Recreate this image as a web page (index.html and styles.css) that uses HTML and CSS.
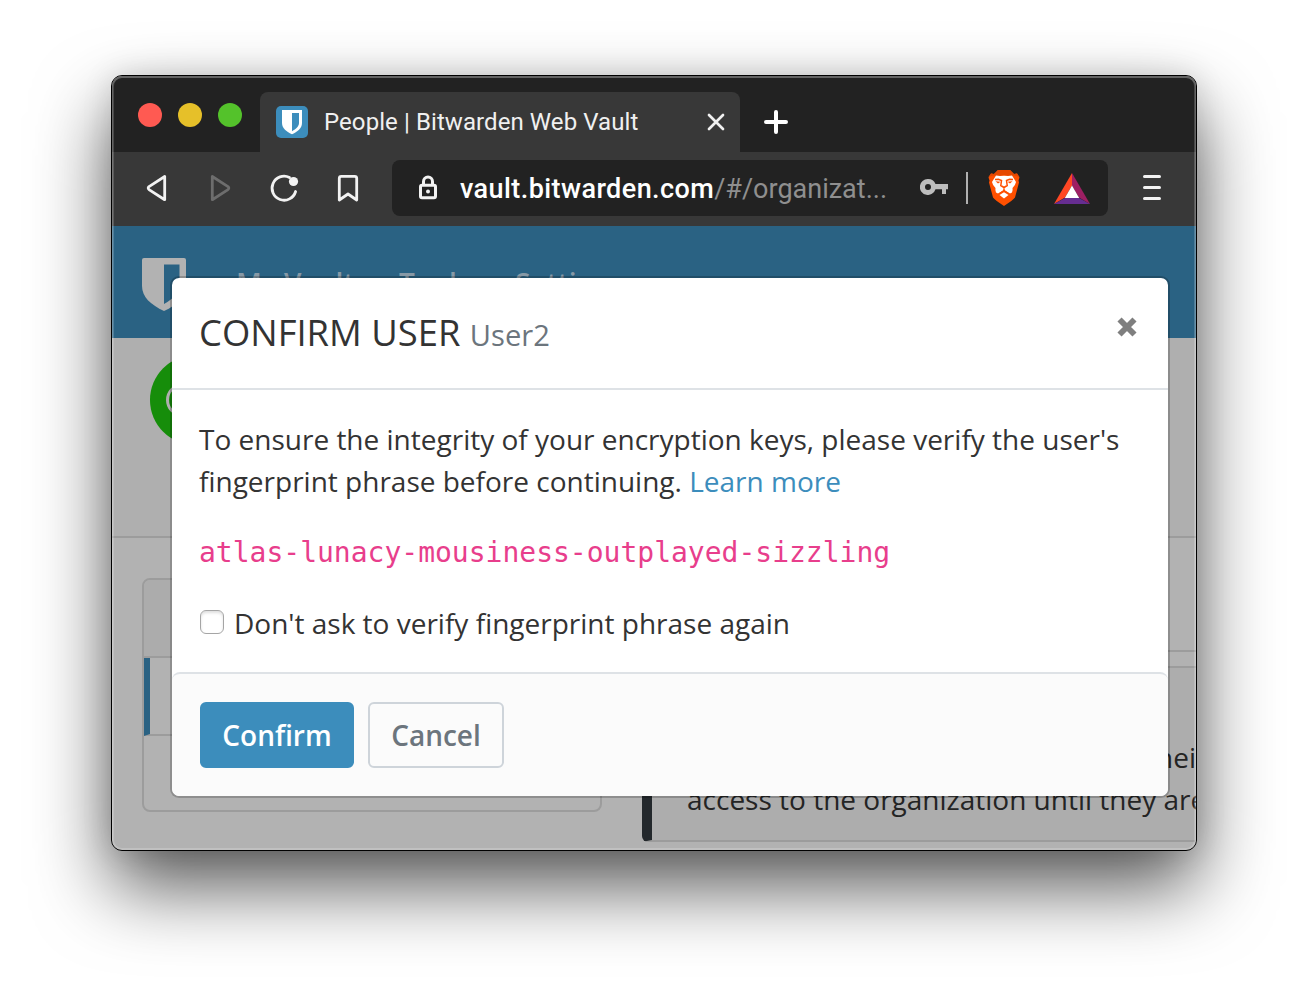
FILE: index.html
```
<!DOCTYPE html>
<html lang="en">
<head>
<meta charset="utf-8">
<title>People | Bitwarden Web Vault</title>
<link rel="stylesheet" href="styles.css">
</head>
<body>
<div class="window">
  <div class="tabstrip">
    <div class="lights"><i class="light red"></i><i class="light yellow"></i><i class="light green"></i></div>
    <div class="tab">
      <svg class="favicon" width="32" height="32" viewBox="0 0 32 32"><rect width="32" height="32" rx="5" fill="#3c8dbc"/><path d="M6 4h20v13c0 5-4 8.500-10 11.300C10 25.500 6 22 6 17z" fill="#fff"/><path d="M16 7h7v10c0 3.300-3 6-7 8.200z" fill="#3c8dbc"/></svg>
      <span class="tab-title">People | Bitwarden Web Vault</span>
      <svg class="tab-close" width="18" height="18" viewBox="0 0 18 18"><path d="M2 2l14 14M16 2L2 16" stroke="#f0f0f0" stroke-width="2.700" stroke-linecap="round"/></svg>
    </div>
    <svg class="newtab" width="24" height="24" viewBox="0 0 24 24"><path d="M12 2v20M2 12h20" stroke="#fff" stroke-width="4" stroke-linecap="round"/></svg>
  </div>
  <div class="toolbar">
    <svg class="nav" width="250" height="40" viewBox="142 168 250 40" fill="none" stroke="#f2f2f2" stroke-width="2.800" stroke-linejoin="round" stroke-linecap="round">
      <path d="M164.700 176.500v23.200L149 189.600q-1.600-1.500 0-3z"/>
      <path d="M212.300 176.500v23.200L228 189.600q1.600-1.500 0-3z" stroke="#6d6d6d"/>
      <path d="M289.500 177.500A12 12 0 1 0 295.600 191.500"/>
      <circle cx="293.500" cy="181.500" r="4.600" fill="#f2f2f2" stroke="none"/>
      <path d="M339.300 200v-21.700q0-2 2-2h13.400q2 0 2 2V200l-8.700-6z"/>
    </svg>
    <div class="address">
      <svg class="lock" width="20" height="26" viewBox="0 0 20 26" fill="none" stroke="#f2f2f2" stroke-width="3"><rect x="2.500" y="10.300" width="15" height="12.400" rx="1.500"/><path d="M5.500 10V6.500a4.500 4.500 0 0 1 9 0V10"/><circle cx="10" cy="16.500" r="2" fill="#f2f2f2" stroke="none"/></svg>
      <span class="url"><span class="domain">vault.bitwarden.com</span><span class="path">/#/organizat...</span></span>
      <svg class="key" width="28" height="16" viewBox="0 0 28 16"><path fill-rule="evenodd" fill="#bdbdbd" d="M8 0a8 8 0 0 1 7.500 5H28v5.300h-2V15h-4v-4.700h-6.500A8 8 0 1 1 8 0zm0 5a3 3 0 1 0 0 6 3 3 0 0 0 0-6z"/></svg>
      <i class="divider"></i>
      <svg class="brave" width="32" height="36" viewBox="0 0 32 36"><path fill="#ff5000" d="M10 0h12l4 4 3-.5 2.500 4-1 3 .5 2-4 15Q25 30 16 36 7 30 5 27.500L1 12.500l.5-2-1-3 2.500-4 3 .5z"/><path fill="#e64800" d="M10 0h12l4 4 3-.5 2.500 3.500-5-1.500L21 6l-5-1-5 1-5.500-.5L.5 7 3 3.500l3 .5z"/><path fill="#fff" d="M8 5.500l4 .6 4-.4 4 .4 4-.6 4 6.500q-.5 3-3.500 6 .5 2.500-.5 4.500l-2 1-6-3.500-6 3.500-2-1q-1-2-.5-4.500-3-3-3.500-6z"/><path fill="none" stroke="#ff5000" stroke-width="1.500" d="M7 9.500l3.500-.3 3 1.300-.7 5L16 17.500l3.200-2-.7-5 3-1.300 3.500.3M16 17.500v3l-5 3.500M16 20.500l5 3.500"/><path fill="#ff5000" d="M7.500 11.300l5 .5-2.500 1.700zM24.500 11.300l-5 .5 2.500 1.700z"/><path fill="#fff" d="M11.500 25L16 22.300l4.500 2.700L16 28.500z"/></svg>
      <svg class="bat" width="36" height="31" viewBox="0 0 36 31"><path fill="#ff4724" d="M18 0v12.500l-7 12L0 31z"/><path fill="#9e1f63" d="M18 0l18 31-11-6.500-7-12z"/><path fill="#662d91" d="M0 31l11-6h14l11 6z"/><path fill="#fff" d="M18 12.500L25.200 25H10.800z"/></svg>
    </div>
    <svg class="menu" width="18" height="26" viewBox="0 0 18 26"><path d="M1.500 2.500h15M1.500 13.500h15M1.500 24.500h15" stroke="#f2f2f2" stroke-width="3" stroke-linecap="round"/></svg>
  </div>
  <div class="viewport">
    <div class="navbar">
      <svg class="logo" width="44" height="53" viewBox="0 0 44 53"><path d="M2 0h40q2 0 2 2v26c0 11-9 19-22 25C9 47 0 39 0 28V2q0-2 2-2z" fill="#b2b2b2"/><path d="M22 6.500h15.500V28c0 7-6 12.500-15.500 18z" fill="#2a6283"/></svg>
      <span class="link vault">My Vault</span><span class="link tools">Tools</span><span class="link">Settings</span>
    </div>
    <div class="orgbar"><div class="avatar"><i class="ring"></i></div></div>
    <div class="content">
      <div class="sidebar"><div class="side-head"></div><div class="side-item active"></div><div class="side-item"></div></div>
      <div class="main">
        <div class="heading"></div>
        <div class="callout"><p class="need">their</p><p>access to the organization until they are</p></div>
      </div>
    </div>
    <div class="modal">
      <div class="modal-head">
        <h2 class="title">CONFIRM USER <small class="who">User2</small></h2>
        <svg class="close" width="20" height="20" viewBox="0 0 20 20"><path d="M2.500 2.500l15 15M17.500 2.500l-15 15" stroke="#7f7f7f" stroke-width="5.800"/></svg>
      </div>
      <div class="modal-body">
        <p class="text">To ensure the integrity of your encryption keys, please verify the user's<br>fingerprint phrase before continuing. <a class="more">Learn more</a></p>
        <p class="phrase">atlas-lunacy-mousiness-outplayed-sizzling</p>
        <label class="check"><i class="box"></i><span>Don't ask to verify fingerprint phrase again</span></label>
      </div>
      <div class="modal-foot"><button class="btn primary">Confirm</button><button class="btn outline">Cancel</button></div>
    </div>
  </div>
</div>
</body>
</html>
```
FILE: styles.css
```
* { box-sizing: border-box; }
body { margin: 0; height: 998px; overflow: hidden; background: #fff; padding: 75px 0 0 111px; font-family: "Open Sans", sans-serif; font-size: 28px; line-height: 42px; color: #333; }
p, h2 { margin: 0; }
svg { display: block; flex: none; }
.window { position: relative; width: 1086px; height: 776px; border: 1px solid #000; border-radius: 11px; background: #b2b2b2; box-shadow: 0 36px 76px rgba(0,0,0,.66), 0 0 30px rgba(0,0,0,.12); }
.window::after { content: ""; position: absolute; inset: 0; border-radius: 10px; box-shadow: inset 0 0 0 2px rgba(255,255,255,.18), inset 0 1px 0 1px rgba(255,255,255,.15); pointer-events: none; }
.tabstrip { display: flex; height: 76px; background: #222; border-radius: 10px 10px 0 0; }
.lights { display: flex; gap: 16px; width: 148px; padding: 27px 0 0 26px; flex: none; }
.light { width: 24px; height: 24px; border-radius: 50%; }
.red { background: #ff5a52; }
.yellow { background: #e6c029; }
.green { background: #54c22b; }
.tab { display: flex; align-items: center; width: 480px; height: 60px; margin-top: 16px; padding: 0 15px 0 16px; background: #383838; border-radius: 8px 8px 0 0; }
.tab-title { flex: 1; margin-left: 16px; font: 24px/30px Roboto, sans-serif; letter-spacing: .08px; color: #f0f0f0; white-space: nowrap; }
.newtab { margin: 34px 0 0 24px; }
.toolbar { display: flex; height: 74px; background: #383838; }
.nav { margin: 16px 0 0 30px; }
.address { display: flex; align-items: center; width: 716px; height: 56px; margin-top: 8px; padding: 0 18px 0 26px; background: #222; border-radius: 8px; }
.url { width: 428px; margin: 2px 0 0 22px; font: 27px/34px Roboto, sans-serif; color: #fff; white-space: nowrap; }
.domain { font-weight: 500; letter-spacing: .42px; }
.path { color: #8f8f8f; }
.key { margin: -2px 0 0 32px; }
.divider { width: 2px; height: 32px; margin-left: 18px; background: #b0b0b0; }
.brave { margin-left: 20px; }
.bat { margin-left: 34px; }
.menu { margin: 22px 0 0 35px; }
.viewport { position: relative; height: 624px; overflow: hidden; border-radius: 0 0 10px 10px; }
.navbar { display: flex; height: 112px; padding: 32px 0 0 30px; background: #2a6283; }
.link { margin-top: 4px; font-weight: 600; color: #8799a6; white-space: nowrap; }
.vault { margin-left: 50px; width: 163px; }
.tools { width: 116px; }
.orgbar { height: 200px; padding: 17px 0 0 38px; background: #afafaf; border-bottom: 2px solid #9c9c9c; }
.avatar { width: 90px; height: 90px; padding: 29px 0 0 16px; border-radius: 50%; background: #168d0a; }
.ring { display: block; width: 30px; height: 32px; border: 3px solid #afafaf; border-radius: 50%; }
.content { display: flex; gap: 40px; height: 312px; padding: 40px 0 0 30px; }
.sidebar { width: 460px; height: 234px; flex: none; border: 2px solid #9c9c9c; border-radius: 8px; }
.side-head { height: 78px; background: #acacac; border-bottom: 2px solid #9c9c9c; border-radius: 6px 6px 0 0; }
.side-item { height: 78px; }
.active { border-left: 6px solid #2a6283; border-bottom: 2px solid #9c9c9c; }
.main { width: 660px; flex: none; }
.heading { height: 74px; margin-bottom: 14px; border-bottom: 2px solid #9c9c9c; }
.callout { height: 176px; padding: 68px 0 0 35px; border: 2px solid #9c9c9c; border-left: 10px solid #23282c; border-radius: 6px; background: #adadad; color: #242424; white-space: nowrap; }
.need { padding-left: 459px; }
.modal { position: absolute; left: 58px; top: 50px; width: 1000px; height: 522px; border: 2px solid rgba(0,0,0,.2); border-radius: 9px; background: #fff; background-clip: padding-box; }
.modal-head { display: flex; justify-content: space-between; height: 112px; padding: 27px 31px 0 27px; border-bottom: 2px solid #dee2e6; }
.title { font-size: 36.400px; line-height: 54px; font-weight: 400; }
.who { font-size: 80%; color: #6c757d; }
.close { margin-top: 12px; }
.modal-body { height: 282px; padding: 28px 27px; }
.more { color: #3c8dbc; }
.text { white-space: nowrap; }
.phrase { margin-top: 30px; font: 28px/42px "DejaVu Sans Mono", monospace; color: #e83e8c; }
.check { display: flex; margin-top: 28px; }
.box { width: 24px; height: 24px; margin: 8px 10px 0 1px; border: 1px solid #a5a5a5; border-radius: 6px; background: #fff; box-shadow: inset 0 2px 3px rgba(0,0,0,.13); }
.modal-foot { display: flex; gap: 14px; height: 124px; padding: 28px; border-top: 2px solid #dee2e6; border-radius: 8px; background: #fbfbfb; }
.btn { height: 66px; padding: 0; border-radius: 6px; font: 600 28px/42px "Open Sans", sans-serif; }
.primary { width: 154px; border: 2px solid #3c8dbc; background: #3c8dbc; color: #fff; }
.outline { width: 136px; border: 2px solid #ced4da; background: #fbfbfb; color: #6c757d; }
```
